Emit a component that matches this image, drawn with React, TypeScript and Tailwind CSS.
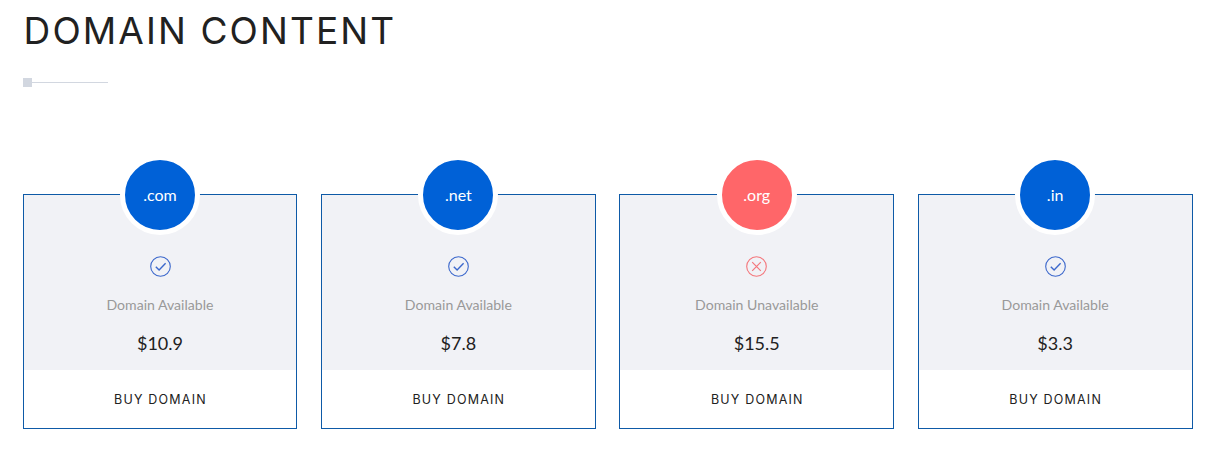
import React from 'react';

interface Domain {
  name: string;
  available: boolean;
  price: string;
}

const domains: Domain[] = [
  { name: '.com', available: true, price: '$10.9' },
  { name: '.net', available: true, price: '$7.8' },
  { name: '.org', available: false, price: '$15.5' },
  { name: '.in', available: true, price: '$3.3' },
];

const StatusIcon: React.FC<{ available: boolean }> = ({ available }) => (
  <svg
    className={`h-[21px] w-[21px] ${available ? 'text-[#3c68cc]' : 'text-[#f4777c]'}`}
    viewBox="0 0 21 21"
    fill="none"
    stroke="currentColor"
    strokeWidth="1.1"
  >
    <circle cx="10.5" cy="10.5" r="9.8" />
    {available ? (
      <path d="M5.8 10.7 9.1 14 15.6 7.3" strokeWidth="1.4" />
    ) : (
      <path d="M6.2 6.2 14.8 14.8M14.8 6.2 6.2 14.8" strokeWidth="1.2" />
    )}
  </svg>
);

const DomainCard: React.FC<{ domain: Domain }> = ({ domain }) => (
  <div className="flex h-[235px] flex-col items-center border border-[#0e5aa7] bg-white text-center font-['Lato',sans-serif]">
    <div className="flex h-[175px] w-full flex-col items-center bg-[#f1f2f6]">
      <div
        className={`-mt-10 flex h-20 w-20 shrink-0 items-center justify-center rounded-full border-[5px] border-white text-base leading-6 text-white ${
          domain.available ? 'bg-[#0061d7]' : 'bg-[#ff6669]'
        }`}
      >
        {domain.name}
      </div>
      <div className="mt-[21px] ml-[0.3px]">
        <StatusIcon available={domain.available} />
      </div>
      <p className="mt-[18px] text-[14.1px] leading-5 text-[#999999]">
        {domain.available ? 'Domain Available' : 'Domain Unavailable'}
      </p>
      <p className="mt-4 text-lg leading-6 text-[#212121]">{domain.price}</p>
    </div>
    <button className="flex w-full flex-1 items-center justify-center pt-0.5 pl-px font-['Inter',sans-serif] text-[12.5px] tracking-[1.2px] text-[#212121] uppercase">
      Buy Domain
    </button>
  </div>
);

export default function App() {
  return (
    <section className="h-[463px] bg-white pt-2 pl-[22.6px]">
      <h2 className="pl-px font-['Inter',sans-serif] text-[37px] leading-[46px] font-[390] tracking-[2.1px] text-[#212121] uppercase">
        Domain Content
      </h2>
      <div className="mt-6 flex items-center">
        <span className="h-[9px] w-[9px] bg-[#d2d7e0]" />
        <span className="h-px w-[76px] bg-[#d2d7e0]" />
      </div>
      <div className="mt-[107px] grid w-[1169.95px] grid-cols-4 gap-[23.65px]">
        {domains.map((domain) => (
          <DomainCard key={domain.name} domain={domain} />
        ))}
      </div>
    </section>
  );
}
